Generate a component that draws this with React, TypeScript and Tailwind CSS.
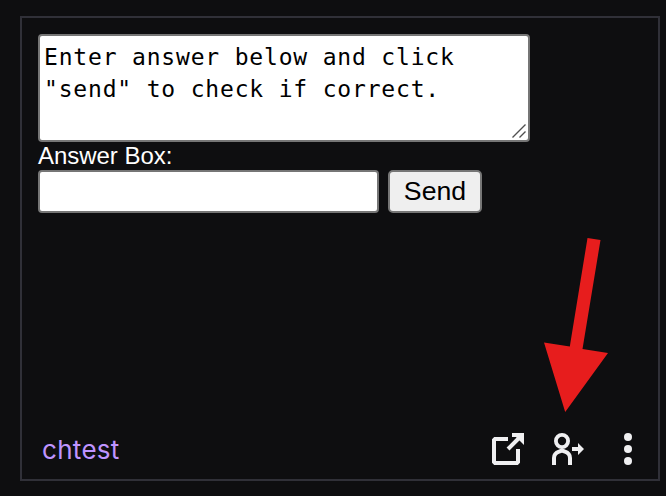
function OpenIcon() {
  return (
    <svg className="h-8 w-8" viewBox="0 0 32 32" fill="none" stroke="#efeff1" strokeWidth="4">
      <path d="M16 6H3L2 7V29L3 30H25L26 29V16" />
      <path d="M16 16L29 3" />
      <path d="M20 0H32V12L28 8L24 4L20 4Z" fill="#efeff1" stroke="none" />
    </svg>
  );
}

function PersonArrowIcon() {
  return (
    <svg className="h-8 w-8" viewBox="0 0 32 32" fill="none" stroke="#efeff1" strokeWidth="4">
      <circle cx="10" cy="8" r="6.1" strokeWidth="3.8" />
      <path d="M2 32V25C2 21.500 4 19.600 7 18.600L10 17.500L13 18.600C16 19.600 18 21.500 18 25V32" />
      <path d="M20 14H26V10L32 16L26 22V18H20Z" fill="#efeff1" stroke="none" />
    </svg>
  );
}

function MoreIcon() {
  return (
    <svg className="h-8 w-8" viewBox="0 0 32 32" fill="#efeff1">
      <circle cx="16" cy="4" r="4" />
      <circle cx="16" cy="16" r="4" />
      <circle cx="16" cy="28" r="4" />
    </svg>
  );
}

export default function App() {
  return (
    <main className="relative h-[496px] w-[666px] overflow-hidden bg-[#0e0e10] pt-4 pl-5">
      <section className="flex h-[465px] w-[640px] flex-col border-2 border-[#303038] px-4 pt-4 font-['Liberation_Sans',sans-serif]">
        <div className="relative h-[108px] w-[492px]">
          <textarea
            className="block h-full w-full resize-none overflow-hidden rounded-[4px] border-2 border-[#767676] bg-white px-1 pt-[5px] pb-[3px] font-['DejaVu_Sans_Mono',monospace] text-[23px] leading-8 tracking-[0.82px] text-black outline-none"
            defaultValue={'Enter answer below and click\n"send" to check if correct.'}
          />
          <svg className="absolute right-[3px] bottom-[3px] h-[15px] w-[15px]" viewBox="0 0 15 15" fill="none" stroke="#505050" strokeWidth="1.4">
            <path d="M0.500 13.500L13.500 0.500M7.500 13.500L13.500 7.500" />
          </svg>
        </div>
        <label className="h-7 text-2xl leading-7 tracking-[-0.04px] text-white" htmlFor="answer">Answer Box:</label>
        <div className="flex gap-[9px]">
          <input id="answer" className="h-[43px] w-[341px] rounded-[4px] border-2 border-[#767676] bg-white px-1 text-black outline-none" />
          <button className="h-[43px] w-[94px] rounded-[5px] border-2 border-[#767676] bg-[#efefef] pb-0.5 text-[26.67px] leading-9 text-black">Send</button>
        </div>
        <footer className="mt-auto mb-[14px] flex h-8 items-center pl-1">
          <a className="pt-[2px] font-['Inter',sans-serif] text-[26px] leading-8 tracking-[0.3px] text-[#bf94ff]">chtest</a>
          <div className="mr-[-2px] ml-auto flex gap-7">
            <OpenIcon />
            <PersonArrowIcon />
            <MoreIcon />
          </div>
        </footer>
      </section>
      <svg className="pointer-events-none absolute top-0 left-0 h-[496px] w-[666px]" viewBox="0 0 666 496">
        <path d="M587.500 238L600.500 240L582.500 349L608 353L565.200 412L544 342.500L569.800 346.500Z" fill="#e71d1d" />
      </svg>
    </main>
  );
}
